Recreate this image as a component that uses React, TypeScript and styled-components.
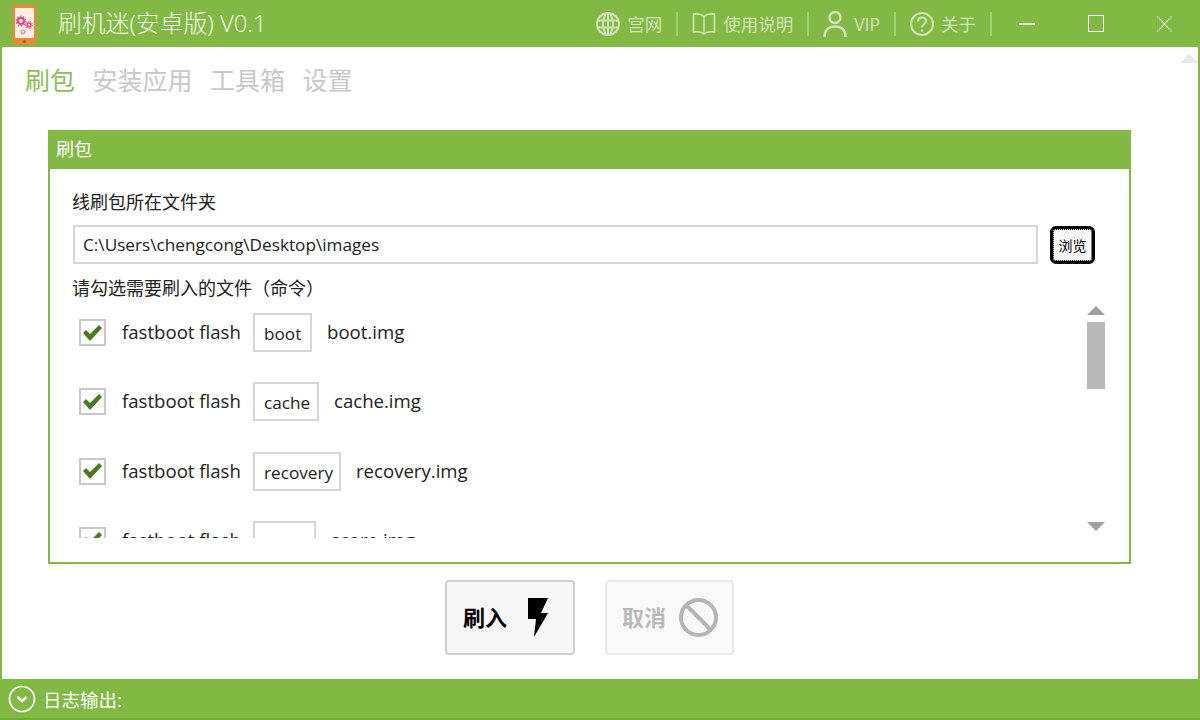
import React from 'react';
import styled, { createGlobalStyle } from 'styled-components';

const GREEN = '#82b944';
const CJK = '"Open Sans", "Noto Sans CJK SC", sans-serif';

const Global = createGlobalStyle`
  html, body { margin: 0; padding: 0; background: #fff; }
  * { box-sizing: border-box; }
`;

const Window = styled.div`
  width: 1200px;
  height: 720px;
  display: flex;
  flex-direction: column;
  position: relative;
  overflow: hidden;
  background: #fff;
  font-family: ${CJK};
  color: #111;
`;
const TitleBar = styled.header`
  height: 47px;
  flex: none;
  background: ${GREEN};
  display: flex;
  align-items: center;
  padding: 0 1px 0 12px;
  color: #fff;
`;
const AppTitle = styled.div`
  margin-left: 21px;
  font-size: 23.8px;
  font-weight: 300;
  color: #f4faec;
  line-height: 47px;
  flex: 1;
`;
const TopLinks = styled.nav`
  display: flex;
  align-items: center;
`;
const TopLink = styled.div`
  display: flex;
  align-items: center;
  gap: 7px;
  font-size: 17.5px;
  color: #cfe3b7;
  white-space: nowrap;
`;
const Sep = styled.div`
  width: 2px;
  height: 24px;
  background: #a6cd7b;
  margin: 0 14px;
`;
const WinButtons = styled.div`
  display: flex;
  align-items: center;
  margin-left: -14px;
`;
const WinButton = styled.div`
  width: 69px;
  height: 47px;
  display: flex;
  align-items: center;
  justify-content: center;
`;
const Body = styled.main`
  flex: 1;
  border-left: 2px solid ${GREEN};
  border-right: 2px solid ${GREEN};
  display: flex;
  flex-direction: column;
  min-height: 0;
`;
const Tabs = styled.div`
  display: flex;
  gap: 17.5px;
  padding: 15px 0 0 23px;
  height: 83px;
  flex: none;
`;
const Tab = styled.div<{ $active?: boolean }>`
  font-size: 25px;
  line-height: 36px;
  color: ${(p) => (p.$active ? '#8bbf57' : '#c8c8c8')};
`;
const PageScrollUp = styled.div`
  position: absolute;
  top: 54px;
  left: 1180px;
  width: 0;
  height: 0;
  border-left: 9px solid transparent;
  border-right: 9px solid transparent;
  border-bottom: 9px solid #e8e8e8;
`;
const Card = styled.section`
  margin-left: 46px;
  width: 1083px;
  height: 434px;
  border: 2px solid ${GREEN};
  display: flex;
  flex-direction: column;
  flex: none;
`;
const CardHead = styled.div`
  height: 38px;
  flex: none;
  background: ${GREEN};
  color: #fff;
  font-size: 18px;
  line-height: 37px;
  padding-left: 7px;
  margin: -1px -1px 0;
`;
const CardBody = styled.div`
  flex: 1;
  padding: 20px 0 0 22px;
  display: flex;
  flex-direction: column;
  min-height: 0;
`;
const FieldLabel = styled.div`
  font-size: 18px;
  line-height: 26px;
  height: 26px;
  color: #222;
`;
const PathRow = styled.div`
  display: flex;
  align-items: center;
  margin-top: 10px;
  margin-left: 1px;
  gap: 12px;
`;
const PathInput = styled.div`
  width: 965px;
  height: 39px;
  border: 2px solid #d6d6d6;
  font-size: 17.2px;
  line-height: 36px;
  padding-left: 8px;
  color: #222;
`;
const Browse = styled.button`
  width: 45px;
  height: 38px;
  border: 3px solid #000;
  border-radius: 6px;
  background: #f6f6f6;
  outline: 1px dotted #000;
  outline-offset: -4px;
  font-family: ${CJK};
  font-size: 14px;
  color: #000;
  padding: 0;
`;
const HintLabel = styled(FieldLabel)`
  margin-top: 11px;
`;
const ListArea = styled.div`
  display: flex;
  height: 229px;
  margin-top: 8px;
`;
const List = styled.div`
  width: 1015px;
  overflow: hidden;
  display: flex;
  flex-direction: column;
  padding-top: 4px;
`;
const Row = styled.div`
  display: flex;
  align-items: center;
  height: 39px;
  flex: none;
  margin-bottom: 30.3px;
  padding-left: 7px;
  font-size: 18.6px;
  color: #222;
`;
const Check = styled.div`
  width: 27px;
  height: 27px;
  border: 2px solid #c9c9c9;
  display: flex;
  align-items: center;
  justify-content: center;
  flex: none;
`;
const Command = styled.span`
  margin-left: 16px;
  width: 131px;
  flex: none;
  position: relative;
  top: -1px;
`;
const PartBox = styled.div<{ $w: number }>`
  width: ${(p) => p.$w}px;
  height: 39px;
  border: 2px solid #d6d6d6;
  font-size: 17.2px;
  line-height: 38px;
  padding-left: 9px;
  flex: none;
`;
const FileName = styled.span`
  margin-left: 15px;
  position: relative;
  top: -1px;
`;
const ScrollBar = styled.div`
  width: 18px;
  display: flex;
  flex-direction: column;
  align-items: center;
  position: relative;
  top: -3px;
`;
const ArrowUp = styled.div`
  width: 0;
  height: 0;
  border-left: 9px solid transparent;
  border-right: 9px solid transparent;
  border-bottom: 9px solid #a0a0a0;
`;
const Thumb = styled.div`
  width: 18px;
  height: 67px;
  margin-top: 7px;
  background: #b8b8b8;
`;
const ArrowDown = styled.div`
  margin-top: 133px;
  width: 0;
  height: 0;
  border-left: 9px solid transparent;
  border-right: 9px solid transparent;
  border-top: 9px solid #a0a0a0;
`;
const Actions = styled.div`
  display: flex;
  justify-content: center;
  gap: 30px;
  margin-top: 16px;
  padding-right: 21px;
`;
const ActionButton = styled.button<{ $disabled?: boolean }>`
  width: ${(p) => (p.$disabled ? 129 : 130)}px;
  height: 75px;
  border: 2px solid ${(p) => (p.$disabled ? '#e8e8e8' : '#cfcfcf')};
  border-radius: 4px;
  background: ${(p) => (p.$disabled ? '#f9f9f9' : '#f6f6f6')};
  color: ${(p) => (p.$disabled ? '#b9b9b9' : '#000')};
  font-family: ${CJK};
  font-size: 22px;
  font-weight: 700;
  display: flex;
  align-items: center;
  justify-content: flex-start;
  gap: ${(p) => (p.$disabled ? 13 : 21)}px;
  padding: 0 0 0 ${(p) => (p.$disabled ? 15 : 16)}px;
`;
const ActionLabel = styled.span`
  margin-bottom: 3px;
`;
const Footer = styled.footer`
  height: 41px;
  flex: none;
  background: ${GREEN};
  border-bottom: 2px solid #73ac35;
  display: flex;
  align-items: center;
  gap: 7px;
  padding-left: 8px;
  color: #fff;
  font-size: 18.5px;
`;

const Globe = () => (
  <svg width="24" height="24" viewBox="0 0 24 24" fill="none" stroke="#cfe3b7" strokeWidth="2">
    <circle cx="12" cy="12" r="11" />
    <ellipse cx="12" cy="12" rx="5" ry="11" />
    <path d="M12 1v22M1.5 8.5h21M1.5 15.5h21" />
  </svg>
);
const Book = () => (
  <svg width="24" height="24" viewBox="0 0 24 24" fill="none" stroke="#cfe3b7" strokeWidth="1.6">
    <path d="M12 5C10 2 6 1.5 1.5 2v18c4-.5 8-.2 10.500 2c2.500-2.200 6.500-2.500 10.500-2V2C18 1.500 14 2 12 5z" />
    <path d="M12 5v17" />
  </svg>
);
const UserIcon = () => (
  <svg width="24" height="28" viewBox="0 0 24 28" fill="none" stroke="#cfe3b7" strokeWidth="2.4">
    <circle cx="12" cy="7.500" r="5.500" />
    <path d="M1.500 27c0-7 4-10.500 10.500-10.500S22.500 20 22.500 27" />
  </svg>
);
const Help = () => (
  <svg width="24" height="24" viewBox="0 0 24 24" fill="none" stroke="#cfe3b7" strokeWidth="2">
    <circle cx="12" cy="12" r="11" />
    <path d="M8 9.500C8 7 9.700 5.500 12 5.500s4 1.500 4 3.500c0 3-4 3.500-4 6.500" />
    <circle cx="12" cy="18.500" r="1.300" fill="#cfe3b7" stroke="none" />
  </svg>
);
const Logo = () => (
  <svg width="25" height="41" viewBox="0 0 25 41" style={{ marginTop: 1 }}>
    <rect x="0.500" y="0.500" width="24" height="40" rx="3" fill="#e8893a" />
    <rect x="3" y="4" width="19" height="30" fill="#fdf1e2" />
    <circle cx="12.500" cy="37.500" r="1.500" fill="#9c5a22" />
    <circle cx="9" cy="17" r="3" fill="none" stroke="#ee3f80" strokeWidth="2" />
    <circle cx="9" cy="17" r="4.800" fill="none" stroke="#ee3f80" strokeWidth="1.200" strokeDasharray="1.500 1.500" />
    <circle cx="17" cy="21" r="2" fill="none" stroke="#ee3f80" strokeWidth="1.500" />
    <circle cx="17" cy="21" r="3.500" fill="none" stroke="#ee3f80" strokeWidth="1" strokeDasharray="1.200 1.200" />
    <circle cx="11" cy="28" r="1.800" fill="none" stroke="#f482ab" strokeWidth="1.300" />
  </svg>
);
const CheckMark = () => (
  <svg width="21" height="18" viewBox="0 0 21 18">
    <path d="M1 9l3-3 4 4L17 1l3 3L8 17z" fill="#4a7a20" />
  </svg>
);
const Bolt = () => (
  <svg width="20" height="39" viewBox="0 0 20 39">
    <path d="M0 0h20l-7 15h7L6 39l2-18H0z" fill="#000" />
  </svg>
);
const Ban = () => (
  <svg width="39" height="39" viewBox="0 0 39 39" fill="none" stroke="#b5b5b5" strokeWidth="4">
    <circle cx="19.500" cy="19.500" r="17.500" />
    <path d="M7 7l25 25" />
  </svg>
);
const Chevron = () => (
  <svg width="28" height="28" viewBox="0 0 28 28" fill="none" stroke="#fff">
    <circle cx="14" cy="14" r="12.500" strokeWidth="1.700" />
    <path d="M9.500 12l4.500 4 4.500-4" strokeWidth="2.600" />
  </svg>
);

const rows = [
  { part: 'boot', w: 59, file: 'boot.img' },
  { part: 'cache', w: 66, file: 'cache.img' },
  { part: 'recovery', w: 88, file: 'recovery.img' },
  { part: 'score', w: 63, file: 'score.img' },
];

export default function App() {
  return (
    <Window>
      <Global />
      <TitleBar>
        <Logo />
        <AppTitle>刷机迷(安卓版) V0.1</AppTitle>
        <TopLinks>
          <TopLink><Globe />宫网</TopLink>
          <Sep />
          <TopLink><Book />使用说明</TopLink>
          <Sep />
          <TopLink><UserIcon />VIP</TopLink>
          <Sep />
          <TopLink><Help />关于</TopLink>
          <Sep />
        </TopLinks>
        <WinButtons>
          <WinButton>
            <svg width="16" height="2"><path d="M0 1h16" stroke="#fff" strokeWidth="1.500" /></svg>
          </WinButton>
          <WinButton>
            <svg width="16" height="17"><rect x="0.500" y="0.500" width="15" height="16" fill="none" stroke="#fff" /></svg>
          </WinButton>
          <WinButton>
            <svg width="17" height="18"><path d="M1 1l15 16M16 1L1 17" stroke="#fff" fill="none" /></svg>
          </WinButton>
        </WinButtons>
      </TitleBar>
      <Body>
        <Tabs>
          <Tab $active>刷包</Tab>
          <Tab>安装应用</Tab>
          <Tab>工具箱</Tab>
          <Tab>设置</Tab>
        </Tabs>
        <PageScrollUp />
        <Card>
          <CardHead>刷包</CardHead>
          <CardBody>
            <FieldLabel>线刷包所在文件夹</FieldLabel>
            <PathRow>
              <PathInput>C:\Users\chengcong\Desktop\images</PathInput>
              <Browse>浏览</Browse>
            </PathRow>
            <HintLabel>请勾选需要刷入的文件（命令）</HintLabel>
            <ListArea>
              <List>
                {rows.map((r) => (
                  <Row key={r.part}>
                    <Check><CheckMark /></Check>
                    <Command>fastboot flash</Command>
                    <PartBox $w={r.w}>{r.part}</PartBox>
                    <FileName>{r.file}</FileName>
                  </Row>
                ))}
              </List>
              <ScrollBar>
                <ArrowUp />
                <Thumb />
                <ArrowDown />
              </ScrollBar>
            </ListArea>
          </CardBody>
        </Card>
        <Actions>
          <ActionButton><ActionLabel>刷入</ActionLabel><Bolt /></ActionButton>
          <ActionButton $disabled><ActionLabel>取消</ActionLabel><Ban /></ActionButton>
        </Actions>
      </Body>
      <Footer>
        <Chevron />
        日志输出:
      </Footer>
    </Window>
  );
}
